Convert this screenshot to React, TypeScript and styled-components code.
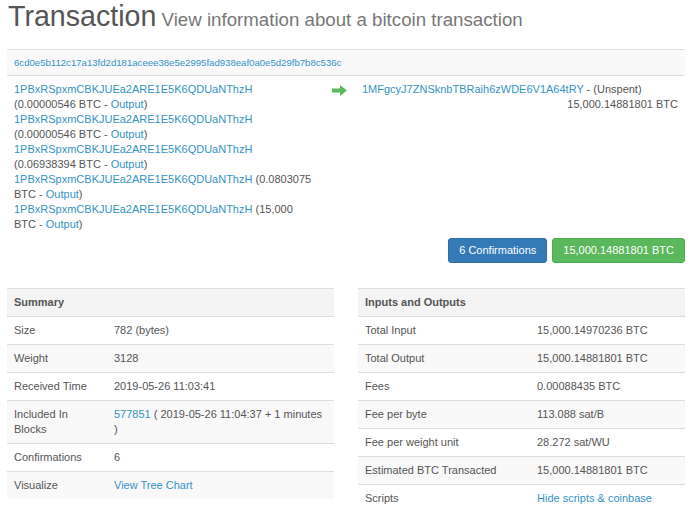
import styled, { createGlobalStyle } from 'styled-components';

const GlobalStyle = createGlobalStyle`
  body {
    margin: 0;
    background: #fff;
    font-family: "Liberation Sans", Arial, sans-serif;
    font-size: 11px;
    line-height: 15px;
    color: #555;
  }
`;

const colors = {
  link: '#3493c6',
  text: '#555',
  border: '#dddddd',
  stripe: '#f9f9f9',
  head: '#f4f4f4',
  blue: '#337ab7',
  green: '#5cb85c',
};

const Page = styled.div`
  padding: 0 7px 0 7px;
  width: 678px;
`;

const Title = styled.h1`
  margin: 0;
  padding-left: 1px;
  font-size: 28.6px;
  font-weight: normal;
  line-height: 32px;
  color: #555;
  small {
    font-size: 18.7px;
    color: #777;
  }
`;

const HashBar = styled.div`
  margin-top: 13px;
  padding: 5px 7px;
  background: ${colors.stripe};
  border-top: 1px solid ${colors.border};
  border-bottom: 1px solid ${colors.border};
  font-size: 9.6px;
`;

const Link = styled.a`
  color: ${colors.link};
  text-decoration: none;
`;

const TxFlow = styled.div`
  display: grid;
  grid-template-columns: 300px 48px 1fr;
  padding: 6px 7px 0 7px;
`;

const InputList = styled.div`
  display: flex;
  flex-direction: column;
`;

const ArrowCell = styled.div`
  padding: 3px 0 0 18px;
`;

const OutputCell = styled.div`
  display: flex;
  flex-direction: column;
`;

const Amount = styled.div`
  text-align: right;
`;

const ButtonRow = styled.div`
  display: flex;
  justify-content: flex-end;
  gap: 5px;
  margin-top: 6px;
`;

const Badge = styled.span<{ $tone: 'blue' | 'green' }>`
  display: inline-flex;
  align-items: center;
  height: 25px;
  padding: 0 10px;
  border-radius: 3px;
  font-size: 11px;
  color: #fff;
  background: ${(p) => (p.$tone === 'blue' ? colors.blue : colors.green)};
  border: 1px solid ${(p) => (p.$tone === 'blue' ? '#2e6da4' : '#4cae4c')};
  box-sizing: border-box;
`;

const Tables = styled.div`
  display: grid;
  grid-template-columns: 1fr 1fr;
  align-items: start;
  gap: 24px;
  margin-top: 25px;
`;

const Table = styled.table<{ $labelWidth: number }>`
  width: 100%;
  border-collapse: collapse;
  font-size: 11px;
  th, td {
    text-align: left;
    padding: 6px 7px;
    border-top: 1px solid ${colors.border};
    vertical-align: top;
    line-height: 15px;
  }
  th {
    font-weight: bold;
    background: ${colors.head};
  }
  td:first-child {
    width: ${(p) => p.$labelWidth}px;
  }
  tr:nth-child(odd) td {
    background: ${colors.stripe};
  }
`;

const ArrowIcon = () => (
  <svg width="15" height="11" viewBox="0 0 15 11">
    <path d="M0 3.5 H8 V0 L15 5.5 L8 11 V7.5 H0 Z" fill="#5cb85c" />
  </svg>
);

const inputs = ['0.00000546', '0.00000546', '0.06938394', '0.0803075', '15,000'];
const addr = '1PBxRSpxmCBKJUEa2ARE1E5K6QDUaNThzH';

type Row = { lbl: string; val: React.ReactNode };

const summary: Row[] = [
  { lbl: 'Size', val: '782 (bytes)' },
  { lbl: 'Weight', val: '3128' },
  { lbl: 'Received Time', val: '2019-05-26 11:03:41' },
  {
    lbl: 'Included In Blocks',
    val: (
      <>
        <Link href="#">577851</Link> ( 2019-05-26 11:04:37 + 1 minutes )
      </>
    ),
  },
  { lbl: 'Confirmations', val: '6' },
  { lbl: 'Visualize', val: <Link href="#">View Tree Chart</Link> },
];

const io: Row[] = [
  { lbl: 'Total Input', val: '15,000.14970236 BTC' },
  { lbl: 'Total Output', val: '15,000.14881801 BTC' },
  { lbl: 'Fees', val: '0.00088435 BTC' },
  { lbl: 'Fee per byte', val: '113.088 sat/B' },
  { lbl: 'Fee per weight unit', val: '28.272 sat/WU' },
  { lbl: 'Estimated BTC Transacted', val: '15,000.14881801 BTC' },
  { lbl: 'Scripts', val: <Link href="#">Hide scripts &amp; coinbase</Link> },
];

const InfoTable = (props: { title: string; rows: Row[]; labelWidth: number }) => {
  const { title, rows, labelWidth } = props;
  return (
    <Table $labelWidth={labelWidth}>
      <tbody>
        <tr>
          <th colSpan={2}>{title}</th>
        </tr>
        {rows.map((row) => (
          <tr key={row.lbl}>
            <td>{row.lbl}</td>
            <td>{row.val}</td>
          </tr>
        ))}
      </tbody>
    </Table>
  );
};

export default function App() {
  return (
    <>
      <GlobalStyle />
      <Page>
        <Title>
          Transaction<small> View information about a bitcoin transaction</small>
        </Title>
        <HashBar>
          <Link href="#">6cd0e5b112c17a13fd2d181aceee38e5e2995fad938eaf0a0e5d29fb7b8c536c</Link>
        </HashBar>
        <TxFlow>
          <InputList>
            {inputs.map((amt, i) => (
              <div key={i}>
                <Link href="#">{addr}</Link> ({amt} BTC - <Link href="#">Output</Link>)
              </div>
            ))}
          </InputList>
          <ArrowCell>
            <ArrowIcon />
          </ArrowCell>
          <OutputCell>
            <div>
              <Link href="#">1MFgcyJ7ZNSknbTBRaih6zWDE6V1A64tRY</Link> - (Unspent)
            </div>
            <Amount>15,000.14881801 BTC</Amount>
          </OutputCell>
        </TxFlow>
        <ButtonRow>
          <Badge $tone="blue">6 Confirmations</Badge>
          <Badge $tone="green">15,000.14881801 BTC</Badge>
        </ButtonRow>
        <Tables>
          <InfoTable title="Summary" rows={summary} labelWidth={86} />
          <InfoTable title="Inputs and Outputs" rows={io} labelWidth={158} />
        </Tables>
      </Page>
    </>
  );
}
